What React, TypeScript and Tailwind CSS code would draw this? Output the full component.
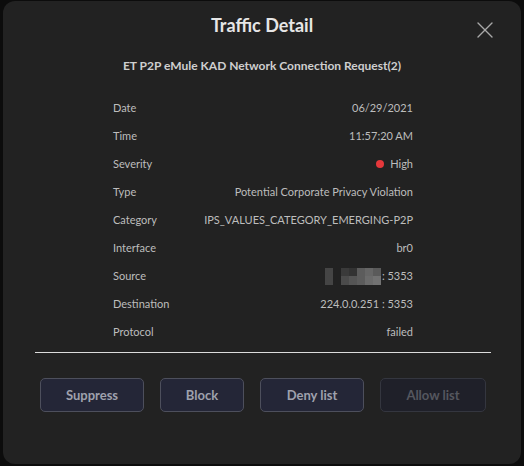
import { X } from "lucide-react";

const rows: { label: string; value: React.ReactNode }[] = [
  { label: "Date", value: "06/29/2021" },
  { label: "Time", value: "11:57:20 AM" },
  {
    label: "Severity",
    value: (
      <span className="flex items-center gap-[6px]">
        <span className="h-[8px] w-[8px] rounded-full bg-[#e5383b]" />
        High
      </span>
    ),
  },
  { label: "Type", value: "Potential Corporate Privacy Violation" },
  { label: "Category", value: "IPS_VALUES_CATEGORY_EMERGING-P2P" },
  { label: "Interface", value: "br0" },
  {
    label: "Source",
    value: (
      <span className="flex items-center">
        <Pixelated />
        <span>: 5353</span>
      </span>
    ),
  },
  { label: "Destination", value: "224.0.0.251 : 5353" },
  { label: "Protocol", value: "failed" },
];

// blurred-out address, drawn as a mosaic of blocks
function Pixelated() {
  const cols = [
    ["#454545", "#454545"],
    ["#222222", "#222222"],
    ["#3a3a3a", "#4b4b4b"],
    ["#333333", "#555555"],
    ["#5c5c5c", "#5c5c5c"],
    ["#666666", "#6b6b6b"],
    ["#5a5a5a", "#727272"],
  ];
  return (
    <span className="mr-[1px] flex">
      {cols.map((c, i) => (
        <span key={i} className="flex w-[8px] flex-col">
          <span className="h-[8px]" style={{ background: c[0] }} />
          <span className="h-[9px]" style={{ background: c[1] }} />
        </span>
      ))}
    </span>
  );
}

function Btn({ label, w, disabled }: { label: string; w: string; disabled?: boolean }) {
  return (
    <button
      className={
        disabled
          ? `${w} h-[34px] rounded-[5px] border border-[#34363f] bg-[#1f2029] pt-px text-[13px] font-bold text-[#55575f]`
          : `${w} h-[34px] rounded-[5px] border border-[#4d4f5c] bg-[#242637] pt-px text-[13px] font-bold text-[#9fa1ad]`
      }
    >
      {label}
    </button>
  );
}

export default function App() {
  return (
    <div
      className="h-[466px] w-[524px] bg-[#0c0c0c] pl-[3px] pt-px"
      style={{ fontFamily: "Lato, 'Open Sans', sans-serif" }}
    >
      <div className="relative h-[463px] w-[518px] rounded-[12px] bg-[#222222] pt-[10px]">
        <h1 className="text-center text-[18px] font-bold leading-[28px] text-[#e6e6e6]">
          Traffic Detail
        </h1>
        <button className="absolute right-[22px] top-[15px] text-[#a8a8a8]">
          <X size={28} strokeWidth={1.2} />
        </button>

        <p className="mt-[18px] text-center text-[12px] font-bold leading-[18px] text-[#cfcfcf]">
          ET P2P eMule KAD Network Connection Request(2)
        </p>

        <div className="ml-[110px] mt-[19px] w-[300px] text-[11px] text-[#bdbdbd]">
          {rows.map((r) => (
            <div key={r.label} className="flex h-[28px] items-center justify-between">
              <span>{r.label}</span>
              <span>{r.value}</span>
            </div>
          ))}
        </div>

        <div className="ml-[32px] mt-[6px] h-px w-[456px] bg-[#dcdcdc]" />

        <div className="ml-[37px] mt-[25px] flex gap-[16px]">
          <Btn label="Suppress" w="w-[104px]" />
          <Btn label="Block" w="w-[84px]" />
          <Btn label="Deny list" w="w-[104px]" />
          <Btn label="Allow list" w="w-[106px]" disabled />
        </div>
      </div>
    </div>
  );
}
